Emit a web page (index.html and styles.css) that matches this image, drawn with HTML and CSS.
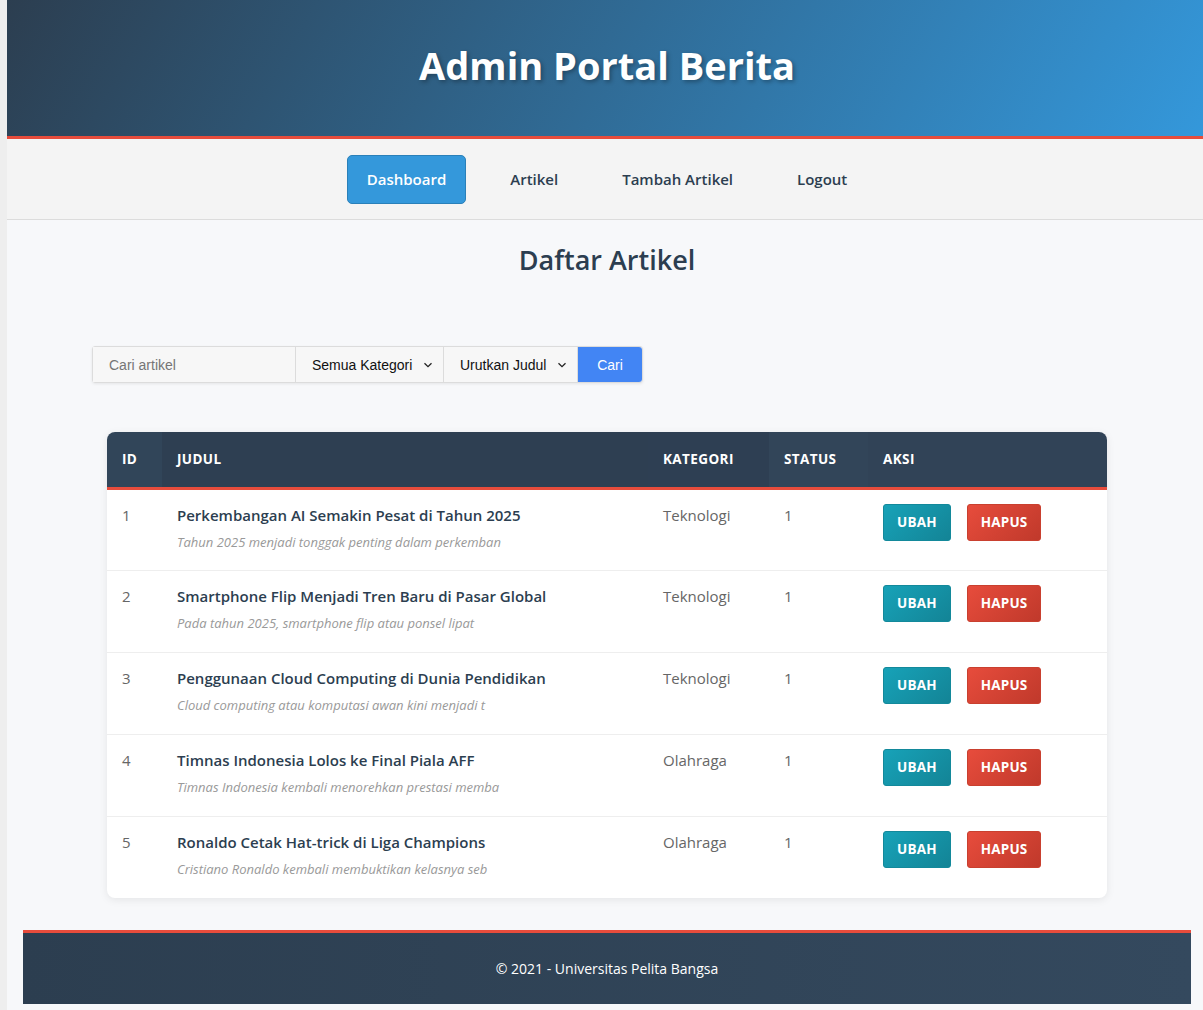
FILE: index.html
```html
<!DOCTYPE html>
<html lang="id">
<head>
<meta charset="utf-8">
<title>Admin Portal Berita</title>
<link rel="stylesheet" href="styles.css">
</head>
<body>
<div class="page">
  <header class="site-header">
    <h1>Admin Portal Berita</h1>
  </header>
  <nav class="site-nav">
    <a class="nav-link active" href="#">Dashboard</a>
    <a class="nav-link" href="#">Artikel</a>
    <a class="nav-link" href="#">Tambah Artikel</a>
    <a class="nav-link" href="#">Logout</a>
  </nav>
  <main class="content">
    <h2 class="page-title">Daftar Artikel</h2>
    <form class="search-bar">
      <input class="search-input" type="text" placeholder="Cari artikel">
      <div class="select sel-cat"><span>Semua Kategori</span><svg width="10" height="6" viewBox="0 0 10 6"><path d="M1.5 1.2 L5 4.6 L8.5 1.2" fill="none" stroke="#222" stroke-width="1.3"/></svg></div>
      <div class="select sel-sort"><span>Urutkan Judul</span><svg width="10" height="6" viewBox="0 0 10 6"><path d="M1.5 1.2 L5 4.6 L8.5 1.2" fill="none" stroke="#222" stroke-width="1.3"/></svg></div>
      <button class="search-btn" type="button">Cari</button>
    </form>
    <div class="table-card">
      <table class="article-table">
        <thead>
          <tr>
            <th class="c-id">ID</th>
            <th class="c-title">JUDUL</th>
            <th class="c-cat">KATEGORI</th>
            <th class="c-status">STATUS</th>
            <th class="c-act">AKSI</th>
          </tr>
        </thead>
        <tbody>
          <tr>
            <td>1</td>
            <td><div class="t-title">Perkembangan AI Semakin Pesat di Tahun 2025</div><div class="t-excerpt">Tahun 2025 menjadi tonggak penting dalam perkemban</div></td>
            <td>Teknologi</td>
            <td>1</td>
            <td><div class="actions"><a class="btn btn-edit" href="#">UBAH</a><a class="btn btn-del" href="#">HAPUS</a></div></td>
          </tr>
          <tr>
            <td>2</td>
            <td><div class="t-title">Smartphone Flip Menjadi Tren Baru di Pasar Global</div><div class="t-excerpt">Pada tahun 2025, smartphone flip atau ponsel lipat</div></td>
            <td>Teknologi</td>
            <td>1</td>
            <td><div class="actions"><a class="btn btn-edit" href="#">UBAH</a><a class="btn btn-del" href="#">HAPUS</a></div></td>
          </tr>
          <tr>
            <td>3</td>
            <td><div class="t-title">Penggunaan Cloud Computing di Dunia Pendidikan</div><div class="t-excerpt">Cloud computing atau komputasi awan kini menjadi t</div></td>
            <td>Teknologi</td>
            <td>1</td>
            <td><div class="actions"><a class="btn btn-edit" href="#">UBAH</a><a class="btn btn-del" href="#">HAPUS</a></div></td>
          </tr>
          <tr>
            <td>4</td>
            <td><div class="t-title">Timnas Indonesia Lolos ke Final Piala AFF</div><div class="t-excerpt">Timnas Indonesia kembali menorehkan prestasi memba</div></td>
            <td>Olahraga</td>
            <td>1</td>
            <td><div class="actions"><a class="btn btn-edit" href="#">UBAH</a><a class="btn btn-del" href="#">HAPUS</a></div></td>
          </tr>
          <tr>
            <td>5</td>
            <td><div class="t-title">Ronaldo Cetak Hat-trick di Liga Champions</div><div class="t-excerpt">Cristiano Ronaldo kembali membuktikan kelasnya seb</div></td>
            <td>Olahraga</td>
            <td>1</td>
            <td><div class="actions"><a class="btn btn-edit" href="#">UBAH</a><a class="btn btn-del" href="#">HAPUS</a></div></td>
          </tr>
        </tbody>
      </table>
    </div>
  </main>
  <footer class="site-footer">&copy; 2021 - Universitas Pelita Bangsa</footer>
</div>
</body>
</html>
```

FILE: styles.css
```css
* { box-sizing: border-box; }
html, body { margin: 0; padding: 0; }
body {
  background: #eeeeee;
  font-family: "Open Sans", "Noto Sans", sans-serif;
  color: #2c3e50;
  overflow: hidden;
}
.page {
  margin-left: 7px;
  width: 1200px;
  background: #f7f8fa;
  min-height: 1010px;
  padding-bottom: 7px;
}
.site-header {
  height: 139px;
  background: linear-gradient(120deg, #2c3e50 0%, #3498db 100%);
  border-bottom: 3px solid #e74c3c;
  display: flex;
  align-items: center;
  justify-content: center;
  padding-bottom: 7px;
}
.site-header h1 {
  margin: 0;
  color: #fff;
  font-size: 38px;
  font-weight: 700;
  text-shadow: 2px 2px 4px rgba(0,0,0,0.3);
}
.site-nav {
  height: 81px;
  background: #f4f4f4;
  border-bottom: 1px solid #dcdcdc;
  display: flex;
  align-items: center;
  justify-content: center;
  gap: 24px;
  padding-top: 1px;
}
.nav-link {
  display: block;
  padding: 13px 19px;
  border: 1px solid transparent;
  border-radius: 5px;
  font-size: 15px;
  font-weight: 600;
  color: #2c3e50;
  text-decoration: none;
  line-height: 21px;
}
.nav-link.active {
  background: #3498db;
  border-color: #2a80b9;
  color: #fff;
}
.content {
  padding: 0 85px;
}
.page-title {
  margin: 0;
  padding-top: 21px;
  text-align: center;
  font-size: 27px;
  font-weight: 600;
  color: #2c3e50;
  line-height: 38px;
}
.search-bar {
  margin: 67px 0 0 0;
  display: flex;
  width: 551px;
  height: 37px;
  border: 1px solid #dcdcdc;
  border-radius: 3px;
  box-shadow: 0 1px 3px rgba(0,0,0,0.08);
  font-family: "Liberation Sans", Arial, sans-serif;
  font-size: 14px;
}
.search-input {
  width: 203px;
  flex-shrink: 0;
  border: none;
  border-right: 1px solid #dcdcdc;
  background: #f7f7f7;
  padding: 0 16px;
  font-family: inherit;
  font-size: 14px;
  outline: none;
}
.search-input::placeholder { color: #757575; }
.select {
  display: flex;
  align-items: center;
  justify-content: space-between;
  flex-shrink: 0;
  white-space: nowrap;
  background: #f7f7f7;
  border-right: 1px solid #dcdcdc;
  padding: 0 10px 0 16px;
  color: #111;
}
.sel-cat { width: 148px; }
.sel-sort { width: 134px; }
.search-btn {
  flex: 1;
  border: none;
  background: #4285f4;
  color: #fff;
  font-family: inherit;
  font-size: 14px;
  border-radius: 0 3px 3px 0;
}
.table-card {
  margin: 49px 15px 0 15px;
  background: #fff;
  border-radius: 8px;
  overflow: hidden;
  box-shadow: 0 2px 8px rgba(0,0,0,0.08);
}
.article-table {
  width: 100%;
  border-collapse: collapse;
}
.article-table thead th {
  color: #fff;
  text-align: left;
  font-size: 13.5px;
  font-weight: 700;
  letter-spacing: 0.4px;
  height: 56px;
  padding: 0 15px;
  border-bottom: 3px solid #e74c3c;
}
.article-table thead th.c-id { background: #314559; }
.article-table thead th.c-title { background: #2e3f52; }
.article-table thead th.c-cat { background: #2e3f53; }
.article-table thead th.c-status { background: #324559; }
.article-table thead th.c-act { background: #314357; }
.c-id { width: 55px; }
.c-title { width: 486px; }
.c-cat { width: 121px; }
.c-status { width: 99px; }
.article-table tbody td {
  vertical-align: top;
  padding: 14px 15px 0 15px;
  height: 82px;
  border-bottom: 1px solid #eeeeee;
  font-size: 15px;
  color: #666;
  line-height: 22px;
}
.article-table tbody tr:last-child td { border-bottom: none; }
.t-title {
  color: #2c3e50;
  font-weight: 600;
  font-size: 15px;
}
.t-excerpt {
  margin-top: 7px;
  font-size: 13px;
  font-style: italic;
  color: #999;
  line-height: 18px;
}
.actions {
  display: flex;
  gap: 16px;
  margin-top: 0;
}
.btn {
  display: block;
  height: 37px;
  line-height: 35px;
  padding: 0 13px;
  border-radius: 3px;
  color: #fff;
  font-size: 13.5px;
  font-weight: 700;
  text-decoration: none;
  letter-spacing: 0.2px;
}
.btn-edit {
  background: linear-gradient(135deg, #17a2b8, #138496);
  border: 1px solid #13899b;
}
.btn-del {
  background: linear-gradient(135deg, #e74c3c, #c0392b);
  border: 1px solid #c9402f;
}
.site-footer {
  margin: 32px 16px 0 16px;
  height: 74px;
  background: linear-gradient(90deg, #2c3e50, #34495e);
  border-top: 3px solid #e74c3c;
  color: #fff;
  font-size: 14px;
  display: flex;
  align-items: center;
  justify-content: center;
}
```
